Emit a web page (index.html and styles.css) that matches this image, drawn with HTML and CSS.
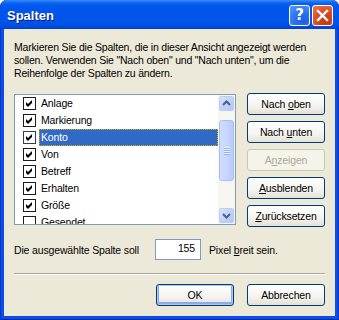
FILE: index.html
```html
<!DOCTYPE html>
<html lang="de">
<head>
<meta charset="utf-8">
<title>Spalten</title>
<link rel="stylesheet" href="styles.css">
</head>
<body>
<div class="window">
  <div class="titlebar">
    <span class="title">Spalten</span>
    <div class="tb-buttons">
      <div class="tb-btn help">?</div>
      <div class="tb-btn close">
        <svg width="21" height="21" viewBox="0 0 21 21"><path d="M6 6 L15 15 M15 6 L6 15" stroke="#fff" stroke-width="2.4" stroke-linecap="square"/></svg>
      </div>
    </div>
  </div>
  <div class="client">
    <p class="desc">Markieren Sie die Spalten, die in dieser Ansicht angezeigt werden<br>sollen. Verwenden Sie "Nach oben" und "Nach unten", um die<br>Reihenfolge der Spalten zu ändern.</p>
    <div class="main">
      <div class="listbox">
        <ul class="items">
          <li class="item"><span class="cb checked"><svg width="11" height="11" viewBox="0 0 11 11"><path d="M2 4 L4 6 L8 2 L8 5 L4 9 L2 7 Z"/></svg></span><span class="label">Anlage</span></li>
          <li class="item"><span class="cb checked"><svg width="11" height="11" viewBox="0 0 11 11"><path d="M2 4 L4 6 L8 2 L8 5 L4 9 L2 7 Z"/></svg></span><span class="label">Markierung</span></li>
          <li class="item selected"><span class="cb checked"><svg width="11" height="11" viewBox="0 0 11 11"><path d="M2 4 L4 6 L8 2 L8 5 L4 9 L2 7 Z"/></svg></span><span class="label">Konto</span></li>
          <li class="item"><span class="cb checked"><svg width="11" height="11" viewBox="0 0 11 11"><path d="M2 4 L4 6 L8 2 L8 5 L4 9 L2 7 Z"/></svg></span><span class="label">Von</span></li>
          <li class="item"><span class="cb checked"><svg width="11" height="11" viewBox="0 0 11 11"><path d="M2 4 L4 6 L8 2 L8 5 L4 9 L2 7 Z"/></svg></span><span class="label">Betreff</span></li>
          <li class="item"><span class="cb checked"><svg width="11" height="11" viewBox="0 0 11 11"><path d="M2 4 L4 6 L8 2 L8 5 L4 9 L2 7 Z"/></svg></span><span class="label">Erhalten</span></li>
          <li class="item"><span class="cb checked"><svg width="11" height="11" viewBox="0 0 11 11"><path d="M2 4 L4 6 L8 2 L8 5 L4 9 L2 7 Z"/></svg></span><span class="label">Größe</span></li>
          <li class="item"><span class="cb"></span><span class="label">Gesendet</span></li>
        </ul>
        <div class="scrollbar">
          <div class="sb-btn"><svg width="15" height="15" viewBox="0 0 15 15"><path d="M4 9 L7.5 5.5 L11 9" fill="none" stroke="#4d6185" stroke-width="2"/></svg></div>
          <div class="sb-track">
            <div class="sb-thumb"><span class="grip"></span><span class="grip"></span><span class="grip"></span><span class="grip"></span></div>
          </div>
          <div class="sb-btn"><svg width="15" height="15" viewBox="0 0 15 15"><path d="M4 6 L7.5 9.5 L11 6" fill="none" stroke="#4d6185" stroke-width="2"/></svg></div>
        </div>
      </div>
      <div class="side-buttons">
        <button class="btn">Nach <u>o</u>ben</button>
        <button class="btn">Nach <u>u</u>nten</button>
        <button class="btn" disabled>A<u>n</u>zeigen</button>
        <button class="btn"><u>A</u>usblenden</button>
        <button class="btn"><u>Z</u>urücksetzen</button>
      </div>
    </div>
    <div class="width-row">
      <span class="width-label">Die ausgewählte Spalte soll</span>
      <span class="field">155</span>
      <span class="width-unit">Pixel <u>b</u>reit sein.</span>
    </div>
    <div class="separator"></div>
    <div class="footer">
      <button class="btn default">OK</button>
      <button class="btn">Abbrechen</button>
    </div>
  </div>
</div>
</body>
</html>
```

FILE: styles.css
```css
html, body {
  margin: 0;
  padding: 0;
  background: #ffffff;
}

body {
  font-family: "Liberation Sans", Arial, sans-serif;
  font-size: 10.5px;
  letter-spacing: -0.15px;
  color: #000;
}

.window {
  width: 339px;
  height: 320px;
  box-sizing: border-box;
  background: #0a4fe0;
  border-radius: 7px 7px 0 0;
  display: flex;
  flex-direction: column;
  overflow: hidden;
  box-shadow: inset 1px 0 0 #0831d9, inset -1px 0 0 #0831d9, inset 0 -1px 0 #0024b8;
}

.titlebar {
  height: 29px;
  flex: none;
  display: flex;
  align-items: center;
  padding: 0 6px 0 7px;
  background: linear-gradient(to bottom,
    #3d8cf6 0px, #0a63f2 3px, #0058ee 6px, #0055ea 12px, #0056ec 20px, #004fe2 26px, #003dd0 29px);
  border-radius: 7px 7px 0 0;
}

.title {
  flex: 1;
  color: #fff;
  font-family: "Liberation Sans", Arial, sans-serif;
  font-weight: bold;
  font-size: 13px;
  letter-spacing: 0;
  text-shadow: 1px 1px 0 #0a1883;
  padding-top: 1px;
}

.tb-buttons {
  display: flex;
  gap: 2px;
  padding-top: 1px;
}

.tb-btn {
  width: 21px;
  height: 21px;
  box-sizing: border-box;
  border: 1px solid #fff;
  border-radius: 3px;
  display: flex;
  align-items: center;
  justify-content: center;
}

.tb-btn svg {
  display: block;
  margin: -1px;
}

.help {
  background: radial-gradient(circle at 70% 80%, #1b5ee8 0%, #2a6ff0 40%, #5a97fb 100%);
  color: #fff;
  font-family: "DejaVu Sans", sans-serif;
  font-weight: bold;
  font-size: 15px;
  letter-spacing: 0;
  line-height: 19px;
}

.close {
  background: radial-gradient(circle at 70% 80%, #c4350f 0%, #d9481c 45%, #ef7a53 100%);
}

.client {
  flex: 1;
  margin: 0 4px 4px;
  background: #ece9d8;
  padding: 0 10px;
  display: flex;
  flex-direction: column;
}

.desc {
  margin: 12px 0 0;
  line-height: 13px;
  white-space: nowrap;
  font-size: 10.5px;
  letter-spacing: -0.2px;
}

.main {
  margin-top: 14px;
  display: flex;
  gap: 11px;
}

.listbox {
  width: 222px;
  height: 131px;
  box-sizing: border-box;
  border: 1px solid #7f9db9;
  background: #fff;
  display: flex;
  overflow: hidden;
}

.items {
  flex: 1;
  list-style: none;
  margin: 0;
  padding: 0;
  overflow: hidden;
}

.item {
  height: 17px;
  display: flex;
  align-items: center;
  padding-left: 8px;
}

.cb {
  width: 13px;
  height: 13px;
  box-sizing: border-box;
  border: 1px solid #1c1c1c;
  background: #fff;
  margin-right: 3px;
  display: flex;
  align-items: center;
  justify-content: center;
  flex: none;
}

.cb svg {
  display: block;
  fill: #000;
}

.label {
  height: 17px;
  line-height: 17px;
  padding: 0 3px 0 2px;
  box-sizing: border-box;
}

.selected .label {
  flex: 1;
  background: #316ac5;
  color: #fff;
  outline: 1px dotted #e0b000;
  outline-offset: -1px;
}

.selected .cb {
  border-color: #2b3f6b;
}

.scrollbar {
  width: 17px;
  flex: none;
  display: flex;
  flex-direction: column;
  background: #f6f5ef;
}

.sb-btn {
  width: 17px;
  height: 17px;
  box-sizing: border-box;
  border: 1px solid #f6f5ef;
  border-radius: 3px;
  background: linear-gradient(135deg, #dce7fe 0%, #c1d3fb 50%, #aec4f6 100%);
  box-shadow: inset 0 0 0 1px #b9cdf8;
  display: flex;
  align-items: center;
  justify-content: center;
}

.sb-track {
  flex: 1;
  padding: 8px 0 26px;
  display: flex;
}

.sb-thumb {
  flex: 1;
  margin: 0 1px;
  border: 1px solid #a9bff0;
  border-radius: 3px;
  background: linear-gradient(to right, #cfdcfd 0%, #c7d7fc 50%, #b8cbf8 100%);
  display: flex;
  flex-direction: column;
  align-items: center;
  justify-content: center;
  gap: 1px;
}

.grip {
  width: 6px;
  height: 1px;
  background: #eef3ff;
  box-shadow: 0 1px 0 #8cb0f8;
}

.side-buttons {
  display: flex;
  flex-direction: column;
  gap: 6px;
  margin-top: -1px;
}

.btn {
  width: 78px;
  height: 22px;
  box-sizing: border-box;
  border: 1px solid #003c74;
  border-radius: 3px;
  background: linear-gradient(to bottom, #ffffff 0%, #f4f3ee 60%, #e3e1d6 100%);
  font-family: "Liberation Sans", Arial, sans-serif;
  font-size: 10.5px;
  letter-spacing: -0.15px;
  color: #000;
  padding: 0;
  margin: 0;
}

.btn:disabled {
  border-color: #c9c7ba;
  color: #aca899;
  background: #f5f4ea;
}

.btn.default {
  box-shadow: inset 0 0 0 1px #b2c5f4, inset 0 -1px 0 2px #91a7f0;
}

.width-row {
  margin-top: 12px;
  display: flex;
  align-items: center;
}

.width-label {
  width: 141px;
}

.field {
  width: 46px;
  height: 21px;
  box-sizing: border-box;
  border: 1px solid #7f9db9;
  background: #fff;
  text-align: right;
  padding-right: 5px;
  line-height: 17px;
}

.width-unit {
  margin-left: 8px;
}

.separator {
  margin-top: 13px;
  height: 1px;
  background: #aca899;
  border-bottom: 1px solid #fff;
}

.footer {
  margin-top: 9px;
  display: flex;
  justify-content: flex-end;
  gap: 13px;
}
```
